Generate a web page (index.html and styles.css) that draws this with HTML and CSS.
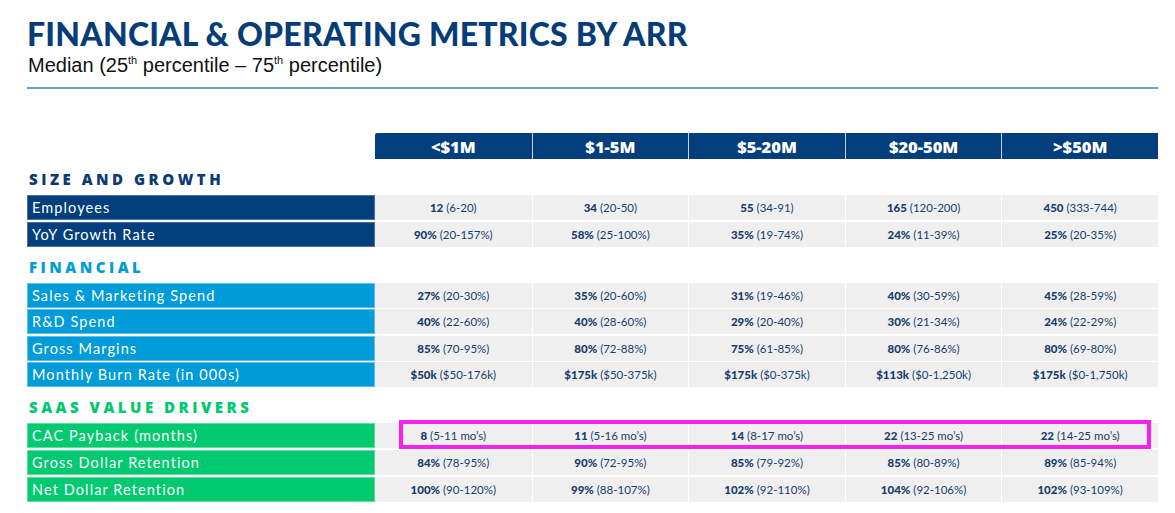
FILE: index.html
```html
<!DOCTYPE html>
<html>
<head>
<meta charset="utf-8">
<link rel="stylesheet" href="styles.css">
</head>
<body>
<div class="page">
  <h1 class="title">FINANCIAL &amp; OPERATING METRICS BY ARR</h1>
  <p class="subtitle">Median (25<sup>th</sup> percentile – 75<sup>th</sup> percentile)</p>
  <div class="rule"></div>

  <div class="table">
    <div class="row head">
      <div class="blank"></div>
      <div class="hcell">&lt;$1M</div>
      <div class="hcell">$1-5M</div>
      <div class="hcell">$5-20M</div>
      <div class="hcell">$20-50M</div>
      <div class="hcell">&gt;$50M</div>
    </div>

    <div class="section navy">SIZE AND GROWTH</div>
    <div class="row navy">
      <div class="label">Employees</div>
      <div class="cell"><b>12</b> (6-20)</div>
      <div class="cell"><b>34</b> (20-50)</div>
      <div class="cell"><b>55</b> (34-91)</div>
      <div class="cell"><b>165</b> (120-200)</div>
      <div class="cell"><b>450</b> (333-744)</div>
    </div>
    <div class="row navy">
      <div class="label">YoY Growth Rate</div>
      <div class="cell"><b>90%</b> (20-157%)</div>
      <div class="cell"><b>58%</b> (25-100%)</div>
      <div class="cell"><b>35%</b> (19-74%)</div>
      <div class="cell"><b>24%</b> (11-39%)</div>
      <div class="cell"><b>25%</b> (20-35%)</div>
    </div>

    <div class="section blue">FINANCIAL</div>
    <div class="row blue">
      <div class="label">Sales &amp; Marketing Spend</div>
      <div class="cell"><b>27%</b> (20-30%)</div>
      <div class="cell"><b>35%</b> (20-60%)</div>
      <div class="cell"><b>31%</b> (19-46%)</div>
      <div class="cell"><b>40%</b> (30-59%)</div>
      <div class="cell"><b>45%</b> (28-59%)</div>
    </div>
    <div class="row blue">
      <div class="label">R&amp;D Spend</div>
      <div class="cell"><b>40%</b> (22-60%)</div>
      <div class="cell"><b>40%</b> (28-60%)</div>
      <div class="cell"><b>29%</b> (20-40%)</div>
      <div class="cell"><b>30%</b> (21-34%)</div>
      <div class="cell"><b>24%</b> (22-29%)</div>
    </div>
    <div class="row blue">
      <div class="label">Gross Margins</div>
      <div class="cell"><b>85%</b> (70-95%)</div>
      <div class="cell"><b>80%</b> (72-88%)</div>
      <div class="cell"><b>75%</b> (61-85%)</div>
      <div class="cell"><b>80%</b> (76-86%)</div>
      <div class="cell"><b>80%</b> (69-80%)</div>
    </div>
    <div class="row blue">
      <div class="label">Monthly Burn Rate (in 000s)</div>
      <div class="cell"><b>$50k</b> ($50-176k)</div>
      <div class="cell"><b>$175k</b> ($50-375k)</div>
      <div class="cell"><b>$175k</b> ($0-375k)</div>
      <div class="cell"><b>$113k</b> ($0-1,250k)</div>
      <div class="cell"><b>$175k</b> ($0-1,750k)</div>
    </div>

    <div class="section green">SAAS VALUE DRIVERS</div>
    <div class="row green highlighted">
      <div class="label">CAC Payback (months)</div>
      <div class="cell"><b>8</b> (5-11 mo’s)</div>
      <div class="cell"><b>11</b> (5-16 mo’s)</div>
      <div class="cell"><b>14</b> (8-17 mo’s)</div>
      <div class="cell"><b>22</b> (13-25 mo’s)</div>
      <div class="cell"><b>22</b> (14-25 mo’s)</div>
      <div class="highlight"></div>
    </div>
    <div class="row green">
      <div class="label">Gross Dollar Retention</div>
      <div class="cell"><b>84%</b> (78-95%)</div>
      <div class="cell"><b>90%</b> (72-95%)</div>
      <div class="cell"><b>85%</b> (79-92%)</div>
      <div class="cell"><b>85%</b> (80-89%)</div>
      <div class="cell"><b>89%</b> (85-94%)</div>
    </div>
    <div class="row green">
      <div class="label">Net Dollar Retention</div>
      <div class="cell"><b>100%</b> (90-120%)</div>
      <div class="cell"><b>99%</b> (88-107%)</div>
      <div class="cell"><b>102%</b> (92-110%)</div>
      <div class="cell"><b>104%</b> (92-106%)</div>
      <div class="cell"><b>102%</b> (93-109%)</div>
    </div>
  </div>
</div>
</body>
</html>
```

FILE: styles.css
```css
* { box-sizing: border-box; }
html, body { margin: 0; padding: 0; background: #fff; }

.page {
  padding: 0 17px 0 27px;
  width: 1175px;
}

.title {
  margin: 0;
  padding-top: 17px;
  font-family: Lato, "Liberation Sans", Arial, sans-serif;
  font-weight: 900;
  font-size: 32px;
  line-height: 34px;
  color: #063d79;
  letter-spacing: 0.22px;
}

.subtitle {
  margin: 2px 0 0 1px;
  font-family: "Liberation Sans Narrow", "Liberation Sans", Arial, sans-serif;
  font-size: 20px;
  line-height: 24px;
  color: #111;
}
.subtitle sup {
  font-size: 11px;
  vertical-align: 8px;
  line-height: 0;
}

.rule {
  margin-top: 10px;
  height: 2px;
  background: #6f9dc4;
  width: 1131px;
}

.table {
  margin-top: 44px;
  width: 1131px;
  font-family: Lato, "Open Sans", sans-serif;
}

.row {
  position: relative;
  display: grid;
  grid-template-columns: 348px repeat(5, 1fr);
  height: 25px;
}
.row + .row { margin-top: 1.6px; }

.head { height: 26px; }
.hcell {
  background: #033f7c;
  color: #fff;
  font-family: "Open Sans", sans-serif;
  font-weight: 800;
  font-size: 16.5px;
  display: flex;
  align-items: center;
  justify-content: center;
}
.hcell + .hcell { border-left: 1.6px solid #c9d3df; }
.hcell:nth-child(2) { border-top-left-radius: 2px; }

.section {
  height: 36px;
  padding: 12px 0 0 2px;
  font-family: "Open Sans", sans-serif;
  font-weight: 800;
  font-size: 15px;
  line-height: 16px;
  letter-spacing: 3.5px;
}
.section.navy { color: #0a3b74; }
.section.blue { color: #009bd9; }
.section.green { color: #00c86e; }

.label {
  display: flex;
  align-items: center;
  padding-left: 5px;
  color: #fff;
  font-size: 14.5px;
  letter-spacing: 1.1px;
}
.row.navy .label { background: #033f7c; box-shadow: inset 0 0 0 1px #4c6f98; }
.row.blue .label { background: #009bd9; box-shadow: inset 0 0 0 1px #5cc0ea; }
.row.green .label { background: #00c96f; box-shadow: inset 0 0 0 1px #5fdca2; }

.cell {
  background: #efefef;
  color: #173d6c;
  font-size: 11.5px;
  display: flex;
  align-items: center;
  justify-content: center;
  white-space: pre;
}
.cell b { font-weight: 900; }
.cell + .cell { border-left: 1.6px solid #fff; }

.highlight {
  position: absolute;
  left: 372px;
  right: 7px;
  top: -3px;
  bottom: -1px;
  border: 4px solid #f920ee;
  pointer-events: none;
}
```
